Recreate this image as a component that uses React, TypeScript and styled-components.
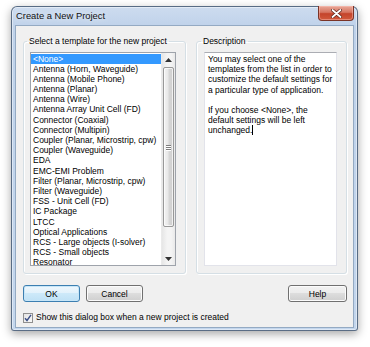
import styled, { createGlobalStyle } from "styled-components";

const GlobalStyle = createGlobalStyle`
  html, body {
    margin: 0;
    padding: 0;
    background: #ffffff;
  }
  body {
    font-family: "Liberation Sans", Arial, sans-serif;
    font-size: 8.5px;
    color: #000;
  }
`;

const Page = styled.div`
  width: 370px;
  height: 347px;
  box-sizing: border-box;
  padding: 6px 0 0 11px;
  overflow: hidden;
`;

const Window = styled.div`
  width: 347px;
  height: 325px;
  box-sizing: border-box;
  display: flex;
  flex-direction: column;
  padding: 0 3px 2px 3px;
  border: 1px solid rgba(52, 72, 98, 0.75);
  border-radius: 6px 6px 3px 3px;
  background: linear-gradient(180deg, #cddcef 0px, #bfd2ea 20px, #c3d6ed 100%);
  box-shadow: 0 3px 10px rgba(0, 0, 0, 0.35), inset 0 0 0 1px rgba(255, 255, 255, 0.45);
`;

const TitleBar = styled.div`
  height: 18px;
  display: flex;
  justify-content: space-between;
  align-items: flex-start;
  flex-shrink: 0;
`;

const Title = styled.span`
  font-size: 9.4px;
  line-height: 18px;
  padding-left: 1px;
  color: #111;
  text-shadow: 0 0 6px rgba(255, 255, 255, 0.9);
`;

const CloseButton = styled.button`
  width: 36px;
  height: 15px;
  margin-top: -1px;
  padding: 0;
  display: flex;
  align-items: center;
  justify-content: center;
  border: 1px solid #7a3326;
  border-top: none;
  border-radius: 0 0 4px 4px;
  background: linear-gradient(180deg, #e9a99a 0%, #d67561 45%, #c4442b 55%, #d1593c 100%);
  box-shadow: inset 0 0 0 1px rgba(255, 200, 190, 0.45);
`;

const Client = styled.div`
  flex: 1;
  box-sizing: border-box;
  background: #f0f0f0;
  border: 1px solid #94aac3;
  padding: 10px 6px 0 7px;
  display: flex;
  flex-direction: column;
`;

const Groups = styled.div`
  display: flex;
  gap: 10px;
`;

const Group = styled.fieldset<{ $width: number }>`
  width: ${(p) => p.$width}px;
  height: 238px;
  box-sizing: border-box;
  margin: 0;
  padding: 6px 9px 6px ${(p) => (p.$width > 155 ? 6 : 7)}px;
  border: 1px solid #d5dfe5;
  border-radius: 3px;
  box-shadow: inset 1px 1px 0 #ffffff, 1px 1px 0 #ffffff;
`;

const Legend = styled.legend`
  margin-left: -3px;
  padding: 0 2px;
  line-height: 10px;
  font-size: 8.5px;
`;

const ListBox = styled.div`
  height: 214px;
  box-sizing: border-box;
  border: 1px solid #9ea3ab;
  background: #fff;
  display: flex;
  overflow: hidden;
`;

const Items = styled.div`
  flex: 1;
  padding-top: 0.5px;
  overflow: hidden;
`;

const Item = styled.div<{ $selected?: boolean }>`
  height: 10.2px;
  line-height: 10.2px;
  padding-left: 2px;
  white-space: nowrap;
  background: ${(p) => (p.$selected ? "#3399ff" : "transparent")};
  color: ${(p) => (p.$selected ? "#fff" : "#000")};
`;

const ScrollBar = styled.div`
  width: 13px;
  display: flex;
  flex-direction: column;
  background: linear-gradient(90deg, #e6e6e6, #f4f4f4 40%, #f4f4f4 70%, #e9e9e9);
  border-left: 1px solid #eaeaea;
`;

const Arrow = styled.div`
  height: 13px;
  display: flex;
  align-items: center;
  justify-content: center;
  flex-shrink: 0;
`;

const Track = styled.div`
  flex: 1;
  padding: 1px 1px 0 1px;
  display: flex;
  flex-direction: column;
`;

const Thumb = styled.div`
  height: 160px;
  box-sizing: border-box;
  border: 1px solid #989898;
  border-radius: 2px;
  background: linear-gradient(90deg, #f3f3f3, #e8e8e8 45%, #d6d6d6 55%, #cfcfcf);
  box-shadow: inset 0 0 0 1px rgba(255, 255, 255, 0.7);
  display: flex;
  align-items: center;
  justify-content: center;
`;

const Grip = styled.div`
  width: 5px;
  display: flex;
  flex-direction: column;
  gap: 1px;
`;

const GripLine = styled.div`
  height: 1px;
  background: #7d7d7d;
  box-shadow: 0 1px 0 #fff;
`;

const DescBox = styled.div`
  height: 214px;
  box-sizing: border-box;
  border: 1px solid #e2e3ea;
  border-top-color: #abadb3;
  background: #fff;
  padding: 1px 3px;
  line-height: 10.2px;
  white-space: pre-wrap;
`;

const Caret = styled.span`
  display: inline-block;
  width: 1px;
  height: 10px;
  background: #000;
  vertical-align: -2px;
`;

const ButtonRow = styled.div`
  display: flex;
  gap: 6px;
  margin-top: 11px;
  padding: 0 0 0 0;
`;

const Spacer = styled.div`
  flex: 1;
`;

const Button = styled.button<{ $default?: boolean; $width?: number }>`
  width: ${(p) => p.$width ?? 57}px;
  height: 17px;
  padding: 0;
  font-family: "Liberation Sans", Arial, sans-serif;
  font-size: 8.5px;
  color: #000;
  border: 1px solid ${(p) => (p.$default ? "#3c7fb1" : "#707070")};
  border-radius: 3px;
  background: ${(p) =>
    p.$default
      ? "linear-gradient(180deg, #eef7fd 0%, #e1f1fb 50%, #cde9f9 50%, #bfe1f5 100%)"
      : "linear-gradient(180deg, #f2f2f2 0%, #ebebeb 50%, #dddddd 50%, #cfcfcf 100%)"};
  box-shadow: inset 0 0 0 1px ${(p) => (p.$default ? "#c7e6f8" : "#fbfbfb")};
`;

const CheckRow = styled.label`
  display: flex;
  align-items: center;
  gap: 3px;
  margin-top: 10px;
  line-height: 11px;
`;

const CheckBox = styled.span`
  width: 10px;
  height: 10px;
  box-sizing: border-box;
  border: 1px solid #8f8f8f;
  background: linear-gradient(135deg, #e4e4e4, #f8f8f8);
  display: flex;
  align-items: center;
  justify-content: center;
`;

const templates = [
  "<None>",
  "Antenna (Horn, Waveguide)",
  "Antenna (Mobile Phone)",
  "Antenna (Planar)",
  "Antenna (Wire)",
  "Antenna Array Unit Cell (FD)",
  "Connector (Coaxial)",
  "Connector (Multipin)",
  "Coupler (Planar, Microstrip, cpw)",
  "Coupler (Waveguide)",
  "EDA",
  "EMC-EMI Problem",
  "Filter (Planar, Microstrip, cpw)",
  "Filter (Waveguide)",
  "FSS - Unit Cell (FD)",
  "IC Package",
  "LTCC",
  "Optical Applications",
  "RCS - Large objects (I-solver)",
  "RCS - Small objects",
  "Resonator",
];

const description =
  "You may select one of the\ntemplates from the list in order to\ncustomize the default settings for\na particular type of application.\n\nIf you choose <None>, the\ndefault settings will be left\nunchanged.";

function ArrowIcon({ down }: { down?: boolean }) {
  return (
    <svg width="7" height="4" viewBox="0 0 7 4">
      <polygon points={down ? "0,0 7,0 3.5,4" : "0,4 7,4 3.5,0"} fill="#333" />
    </svg>
  );
}

export default function App() {
  return (
    <>
      <GlobalStyle />
      <Page>
        <Window>
          <TitleBar>
            <Title>Create a New Project</Title>
            <CloseButton aria-label="Close">
              <svg width="11" height="9" viewBox="0 0 11 9">
                <path d="M1.5 1 L9.5 8 M9.5 1 L1.5 8" stroke="#5a2218" strokeWidth="3.2" strokeLinecap="round" />
                <path d="M1.5 1 L9.5 8 M9.5 1 L1.5 8" stroke="#ffffff" strokeWidth="1.8" strokeLinecap="round" />
              </svg>
            </CloseButton>
          </TitleBar>
          <Client>
            <Groups>
              <Group $width={163}>
                <Legend>Select a template for the new project</Legend>
                <ListBox>
                  <Items>
                    {templates.map((t, i) => (
                      <Item key={t} $selected={i === 0}>
                        {t}
                      </Item>
                    ))}
                  </Items>
                  <ScrollBar>
                    <Arrow>
                      <ArrowIcon />
                    </Arrow>
                    <Track>
                      <Thumb>
                        <Grip>
                          <GripLine />
                          <GripLine />
                          <GripLine />
                        </Grip>
                      </Thumb>
                    </Track>
                    <Arrow>
                      <ArrowIcon down />
                    </Arrow>
                  </ScrollBar>
                </ListBox>
              </Group>
              <Group $width={151}>
                <Legend>Description</Legend>
                <DescBox>
                  {description}
                  <Caret />
                </DescBox>
              </Group>
            </Groups>
            <ButtonRow>
              <Button $default>OK</Button>
              <Button>Cancel</Button>
              <Spacer />
              <Button $width={59}>Help</Button>
            </ButtonRow>
            <CheckRow>
              <CheckBox>
                <svg width="8" height="8" viewBox="0 0 8 8">
                  <path d="M1 4.2 L3 6.5 L7 0.8" stroke="#3b4f86" strokeWidth="1.4" fill="none" />
                </svg>
              </CheckBox>
              <span>Show this dialog box when a new project is created</span>
            </CheckRow>
          </Client>
        </Window>
      </Page>
    </>
  );
}
